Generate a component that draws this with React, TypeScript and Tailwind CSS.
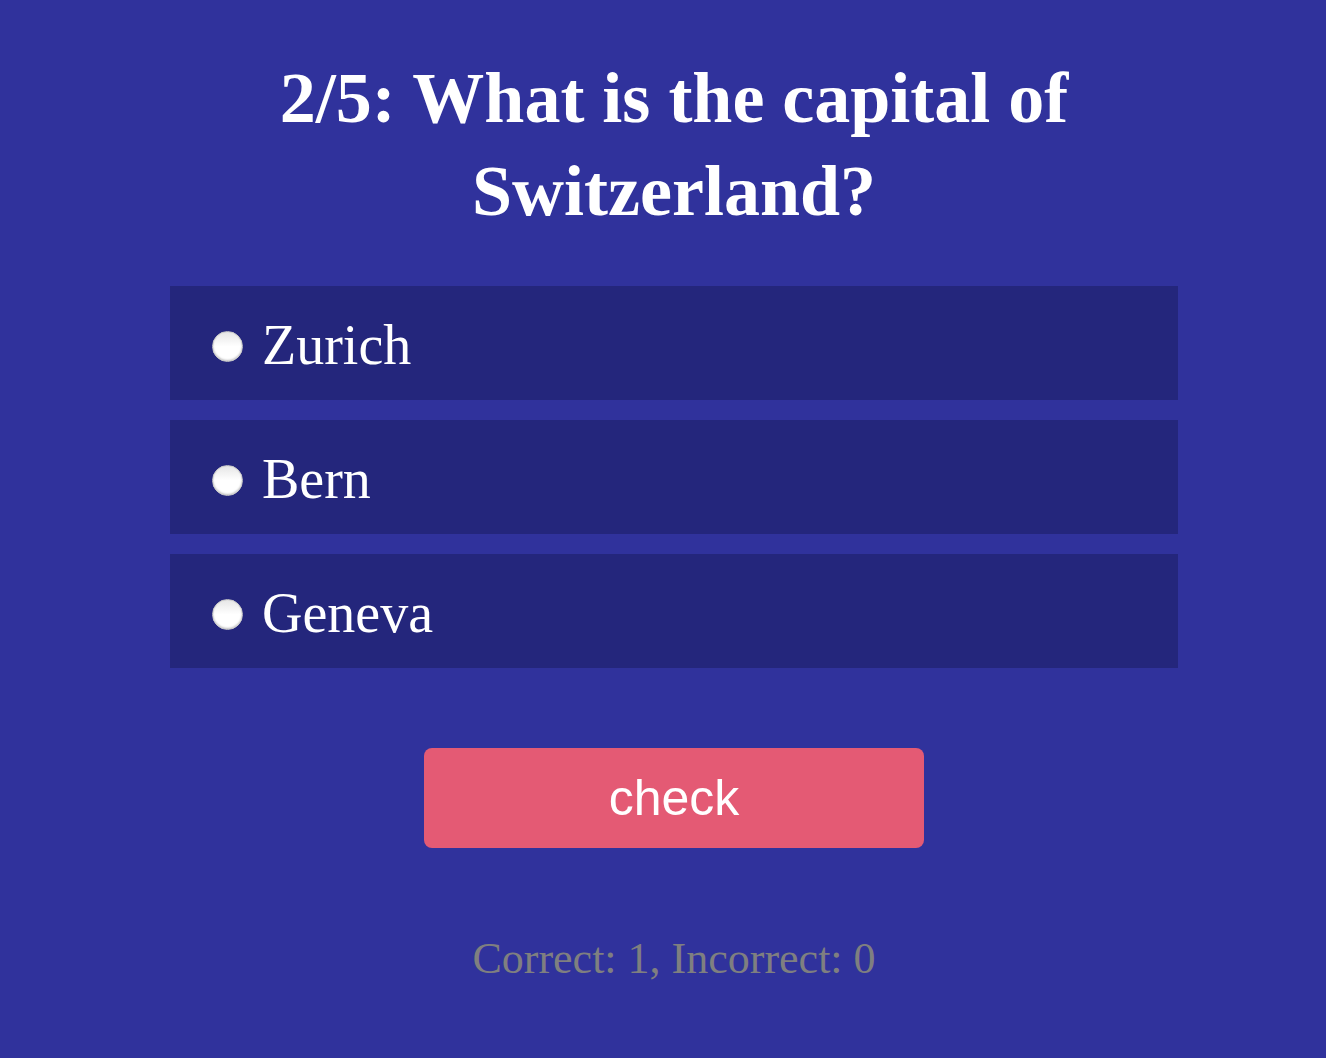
import { useState } from 'react';

const options = ['Zurich', 'Bern', 'Geneva'];

export default function App() {
  const [selected, setSelected] = useState<string | null>(null);

  return (
    <div className="min-h-screen bg-[#30329c] flex flex-col items-center pt-[52px] pl-[22px]" style={{ fontFamily: '"Liberation Serif", serif' }}>
      <h1 className="text-white text-[72px] leading-[93px] font-bold text-center max-w-[900px]">
        2/5: What is the capital of Switzerland?
      </h1>

      <div className="w-[1008px] mt-[48px] flex flex-col gap-5">
        {options.map(opt => (
          <label
            key={opt}
            onClick={() => setSelected(opt)}
            className="h-[114px] bg-[#24267c] flex items-center pl-[42px] gap-[19px] cursor-pointer"
          >
            <span className="mt-[6px] w-[31px] h-[31px] rounded-full bg-gradient-to-b from-[#e6e6e6] via-white to-white shadow-[inset_0_-1px_2px_rgba(0,0,0,0.25)] border border-[#c9c9c9] flex items-center justify-center">
              {selected === opt && <span className="w-3 h-3 rounded-full bg-[#2563eb]" />}
            </span>
            <span className="text-white text-[56px] leading-none mt-[4px]">{opt}</span>
          </label>
        ))}
      </div>

      <button
        className="mt-[80px] w-[500px] h-[100px] rounded-lg bg-[#e45a74] text-white text-[50px]"
        style={{ fontFamily: '"Liberation Sans", Arial, sans-serif' }}
      >
        check
      </button>

      <p className="mt-[78px] text-[#7f7f80] text-[44px]">Correct: 1, Incorrect: 0</p>
    </div>
  );
}
